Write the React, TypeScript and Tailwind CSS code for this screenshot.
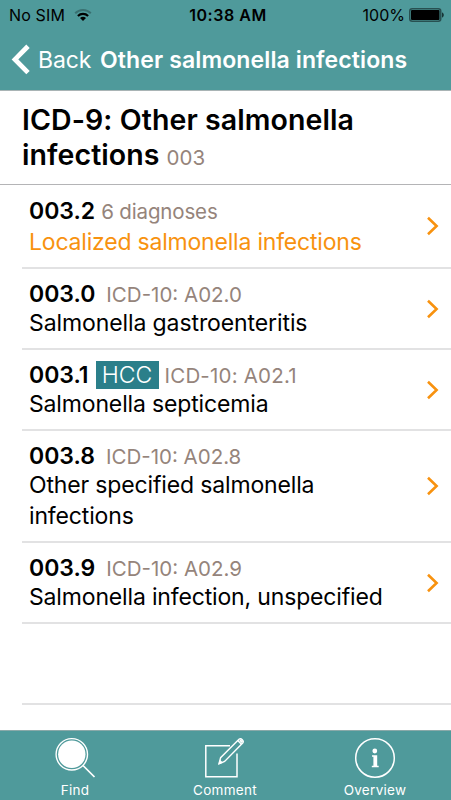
import React from "react";
import { clsx } from "clsx";

interface Diagnosis {
  code: string;
  name: string;
  icd10?: string;
  count?: string;
  hcc?: boolean;
  rowClassName: string;
  nameClassName: string;
}

const diagnoses: Diagnosis[] = [
  {
    code: "003.2",
    name: "Localized salmonella infections",
    count: "6 diagnoses",
    rowClassName: "h-[84px]",
    nameClassName: "tracking-[-0.2px]",
  },
  {
    code: "003.0",
    name: "Salmonella gastroenteritis",
    icd10: "A02.0",
    rowClassName: "h-[81px]",
    nameClassName: "tracking-[-0.1px]",
  },
  {
    code: "003.1",
    name: "Salmonella septicemia",
    icd10: "A02.1",
    hcc: true,
    rowClassName: "h-[81px]",
    nameClassName: "tracking-[-0.15px]",
  },
  {
    code: "003.8",
    name: "Other specified salmonella infections",
    icd10: "A02.8",
    rowClassName: "h-[112px]",
    nameClassName: "tracking-[-0.15px]",
  },
  {
    code: "003.9",
    name: "Salmonella infection, unspecified",
    icd10: "A02.9",
    rowClassName: "h-[81px]",
    nameClassName: "tracking-[-0.16px]",
  },
];

function StatusBar() {
  return (
    <div className="grid h-[30px] grid-cols-3 items-center pl-[9px] pr-[7px] text-[16px] leading-[30px] text-black">
      <div className="flex items-center gap-[9px]">
        <span className="tracking-[0.15px]">No SIM</span>
        <svg width="18" height="14" viewBox="0 0 18 14" fill="none">
          <path d="M1.2 5.2a11 11 0 0 1 15.6 0" stroke="#2c5555" strokeOpacity="0.6" strokeWidth="2" />
          <path d="M3.9 8a7.2 7.2 0 0 1 10.2 0" stroke="#000" strokeWidth="2.1" />
          <path d="M9 13.1 6 10.1a4.3 4.3 0 0 1 6 0z" fill="#000" />
        </svg>
      </div>
      <span className="pl-[3px] text-center font-semibold tracking-[0.55px]">10:38 AM</span>
      <div className="flex items-center justify-end gap-[4px]">
        <span>100%</span>
        <svg width="35" height="14" viewBox="0 0 35 14">
          <rect x="0.75" y="0.75" width="31" height="12.5" rx="2.5" fill="none" stroke="#285051" strokeWidth="1.5" />
          <rect x="2" y="2" width="28.5" height="10" rx="1" fill="#000" />
          <path d="M33 4.5c2.4.6 2.4 4.4 0 5z" fill="#173536" />
        </svg>
      </div>
    </div>
  );
}

function NavBar() {
  return (
    <div className="flex h-[60px] items-center pl-[11px] text-[23px] leading-[60px] whitespace-nowrap text-white">
      <svg width="20" height="32" viewBox="0 0 20 32" fill="none">
        <path d="M17 2.2 4 15.4 17 28.600" stroke="currentColor" strokeWidth="4.8" />
      </svg>
      <span className="ml-[7px] w-[62px] tracking-[-0.1px]">Back</span>
      <h1 className="font-semibold tracking-[0.12px]">Other salmonella infections</h1>
    </div>
  );
}

function DiagnosisRow({ item }: { item: Diagnosis }) {
  return (
    <li
      className={clsx(
        "ml-[22px] flex items-center border-b-2 border-[#e2e2e3] pl-[7px] pr-[12px]",
        item.rowClassName
      )}
    >
      <div className={clsx("w-[375px] shrink-0 self-start", item.count ? "pt-[11px]" : "pt-[12px]")}>
        <div
          className={clsx(
            "flex items-baseline whitespace-nowrap",
            item.count ? "h-[31px] leading-[31px]" : "h-[27px] leading-[27px]"
          )}
        >
          <span className="text-[23px] font-semibold">{item.code}</span>
          {item.hcc && (
            <span className="-mt-[1px] ml-[7px] w-[63px] bg-[#2b7f8a] text-center text-[23px] leading-[28px] font-light text-white">
              HCC
            </span>
          )}
          {item.count && (
            <span className="ml-[6px] text-[20.5px] tracking-[-0.15px] text-[#95847b]">{item.count}</span>
          )}
          {item.icd10 && (
            <span
              className={clsx(
                "text-[20.5px] text-[#95847b]",
                item.hcc ? "ml-[6px] tracking-[0.2px]" : "ml-[11px]"
              )}
            >
              ICD-10: {item.icd10}
            </span>
          )}
        </div>
        <p
          className={clsx(
            "text-[23px] leading-[31px]",
            item.nameClassName,
            item.count ? "text-[#f8920f]" : "text-black"
          )}
        >
          {item.name}
        </p>
      </div>
      <svg className="ml-[22px] shrink-0" width="14" height="20" viewBox="0 0 14 20" fill="none">
        <path d="M2 1.8 10.6 10 2 18.2" stroke="#f8920f" strokeWidth="2.6" />
      </svg>
    </li>
  );
}

function TabItem({ label, children }: { label: string; children: React.ReactNode }) {
  return (
    <button className="flex w-[150px] flex-col items-center pt-[6px] text-white">
      {children}
      <span className="mt-[1px] text-[13.5px] leading-[20px] tracking-[0.3px]">{label}</span>
    </button>
  );
}

function TabBar() {
  return (
    <nav className="flex h-[70px] border-t border-[#8aa9a9] bg-[#4f9a9b]">
      <TabItem label="Find">
        <svg width="42" height="42" viewBox="0 0 42 42" fill="none">
          <circle cx="17.8" cy="17.3" r="15.7" stroke="currentColor" strokeWidth="1.4" />
          <circle cx="17.8" cy="17.3" r="13.7" fill="currentColor" />
          <path d="m29 28.5 11.5 11.5" stroke="currentColor" strokeWidth="1.7" />
        </svg>
      </TabItem>
      <TabItem label="Comment">
        <svg width="42" height="42" viewBox="0 0 42 42" fill="none" stroke="currentColor" strokeWidth="1.5">
          <path d="M26 8.8H1.8v31H33V16.500" />
          <path d="M15 26.8 16.600 20.7 35 2.300q1.600-1.300 3.300.4t.4 3.300L20.600 24.500z" strokeWidth="1.400" />
          <path d="m15 26.800 1-3.300 2.300 2z" fill="currentColor" strokeWidth="1" />
          <path d="m33.800 3.500 3.700 3.700" />
          <path d="m36 3 2.300 2.300" strokeWidth="2" />
        </svg>
      </TabItem>
      <TabItem label="Overview">
        <svg width="42" height="42" viewBox="0 0 42 42" fill="none">
          <circle cx="21" cy="21" r="19.3" stroke="currentColor" strokeWidth="1.5" />
          <circle cx="20.8" cy="14" r="2.4" fill="currentColor" />
          <path d="M18 18.2h5.200v10.600h1.500v1.500h-6.900v-1.500h1.600v-9.100H18z" fill="currentColor" />
        </svg>
      </TabItem>
    </nav>
  );
}

export default function App() {
  return (
    <div className="flex h-[800px] w-[451px] flex-col overflow-hidden bg-white font-['Inter','Noto_Sans',sans-serif]">
      <header className="h-[91px] shrink-0 border-b border-[#a9b4b5] bg-[#4f9a9b]">
        <StatusBar />
        <NavBar />
      </header>
      <div className="h-[94px] shrink-0 border-b border-[#b4b4b6] pt-[11px] pl-[22px] text-[28.5px] leading-[35px] font-semibold text-black">
        <h2 className="w-[360px] tracking-[0.08px]">
          ICD-9: Other salmonella infections
          <span className="ml-[7px] text-[20.5px] leading-none font-normal tracking-normal text-[#95847b]">
            003
          </span>
        </h2>
      </div>
      <ul className="flex-1">
        {diagnoses.map((item) => (
          <DiagnosisRow key={item.code} item={item} />
        ))}
        <li className="ml-[22px] h-[81px] border-b-2 border-[#e2e2e3]" />
      </ul>
      <TabBar />
    </div>
  );
}
